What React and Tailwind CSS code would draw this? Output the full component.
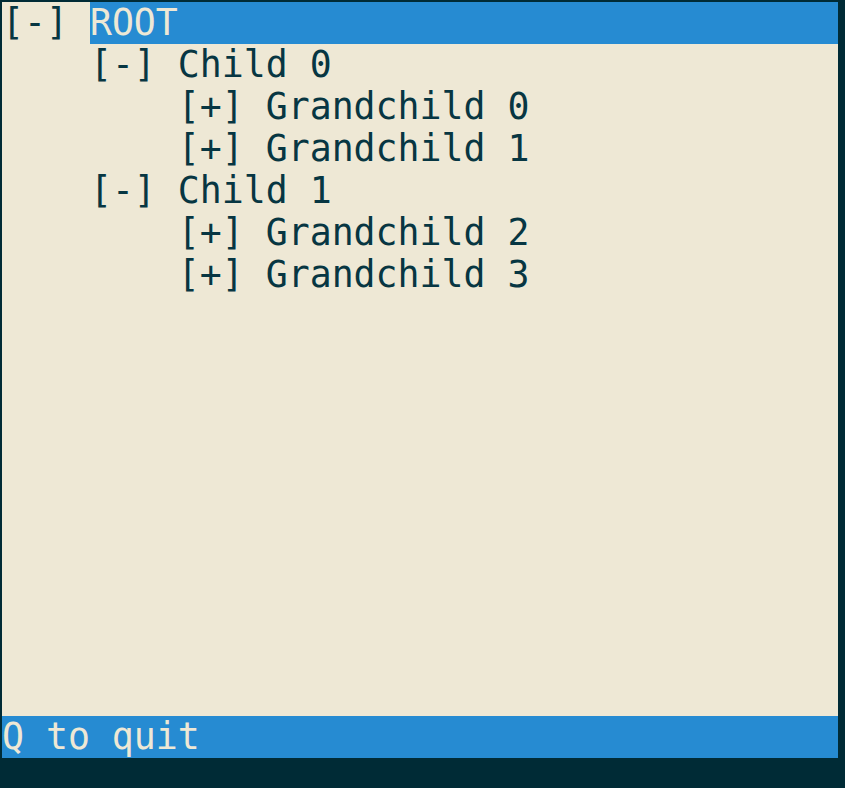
export default function App() {
  const rows = [
    { indent: "", marker: "[-] ", label: "ROOT", selected: true },
    { indent: "    ", marker: "[-] ", label: "Child 0" },
    { indent: "        ", marker: "[+] ", label: "Grandchild 0" },
    { indent: "        ", marker: "[+] ", label: "Grandchild 1" },
    { indent: "    ", marker: "[-] ", label: "Child 1" },
    { indent: "        ", marker: "[+] ", label: "Grandchild 2" },
    { indent: "        ", marker: "[+] ", label: "Grandchild 3" },
  ];
  return (
    <div
      className="w-[845px] h-[788px] bg-[#002b36] pt-[2px] pl-[2px] text-[36.5px] leading-[42px] whitespace-pre"
      style={{ fontFamily: '"DejaVu Sans Mono", monospace' }}
    >
      <div className="w-[836px] h-[714px] bg-[#eee8d5] text-[#073642] flex flex-col">
        {rows.map((r, i) => (
          <div key={i} className="flex h-[42px]">
            <span>{r.indent}{r.marker}</span>
            {r.selected ? (
              <span className="flex-1 bg-[#268bd2] text-[#eee8d5]">{r.label}</span>
            ) : (
              <span>{r.label}</span>
            )}
          </div>
        ))}
      </div>
      <div className="w-[836px] h-[42px] bg-[#268bd2] text-[#eee8d5]">Q to quit</div>
    </div>
  );
}
